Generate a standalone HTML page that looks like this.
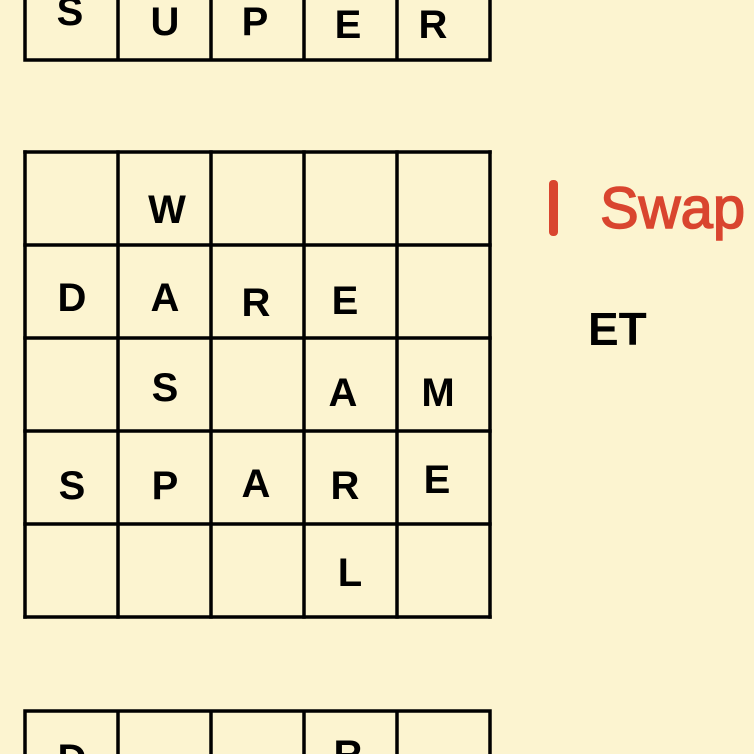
<!DOCTYPE html>
<html><head><style>
html,body{margin:0;padding:0;background:#fcf4d0;}
svg{display:block}
text{font-family:"Liberation Sans",sans-serif;}
</style></head><body>
<svg width="754" height="754" viewBox="0 0 754 754">
<rect width="754" height="754" fill="#fcf4d0"/>
<g stroke="#000" stroke-width="3.5" fill="none" stroke-linecap="square">
<path d="M25,-40V60M118,-40V60M211,-40V60M304,-40V60M397,-40V60M490,-40V60M25,60H490"/>
<path d="M25,152V617M118,152V617M211,152V617M304,152V617M397,152V617M490,152V617"/>
<path d="M25,152H490M25,245H490M25,338H490M25,431H490M25,524H490M25,617H490"/>
<path d="M25,711V760M118,711V760M211,711V760M304,711V760M397,711V760M490,711V760M25,711H490"/>
</g>
<g font-size="40" font-weight="bold" text-anchor="middle" fill="#000">
<text x="70" y="25">S</text><text x="165" y="35">U</text><text x="255" y="35">P</text><text x="348" y="38">E</text><text x="433" y="38">R</text>
<text x="167" y="223">W</text>
<text x="72" y="311">D</text><text x="165" y="311">A</text><text x="256" y="316">R</text><text x="345" y="314">E</text>
<text x="165" y="401">S</text><text x="343" y="406">A</text><text x="438" y="406">M</text>
<text x="72" y="499">S</text><text x="165" y="499">P</text><text x="256" y="497">A</text><text x="345" y="499">R</text><text x="437" y="493">E</text>
<text x="350" y="586">L</text>
<text x="72" y="772">D</text><text x="348" y="768">R</text>
</g>
<g fill="#d9452f">
<rect x="549" y="180" width="9" height="56" rx="4"/>
<text x="600" y="228" font-size="58" stroke="#d9452f" stroke-width="1.5">Swap</text>
</g>
<text x="588" y="345" font-size="46" font-weight="bold" fill="#000">ET</text>
</svg>
</body></html>
